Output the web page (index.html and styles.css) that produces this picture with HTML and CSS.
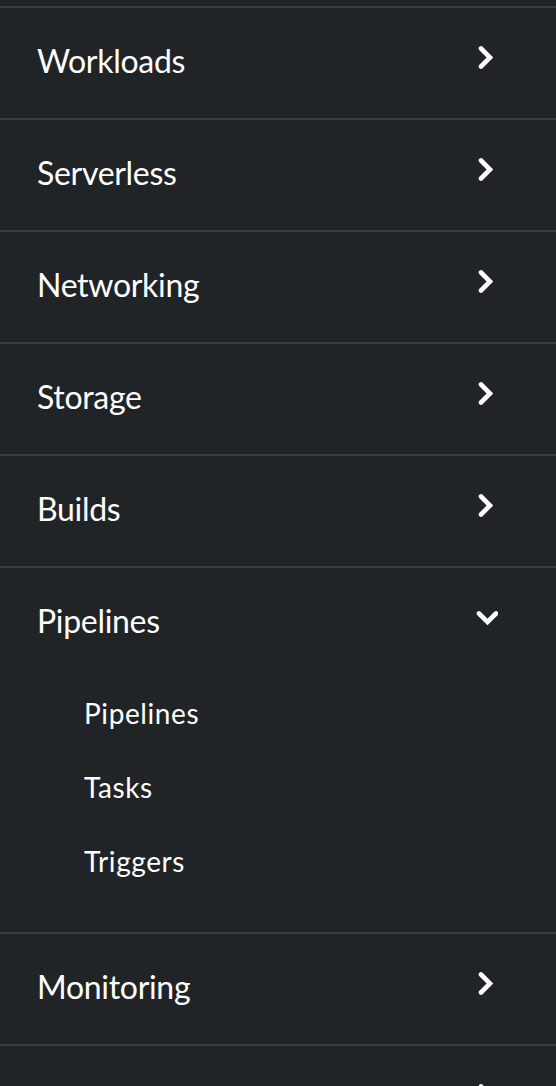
FILE: index.html
```html
<!DOCTYPE html>
<html lang="en">
<head>
<meta charset="utf-8">
<title>Navigation</title>
<link rel="stylesheet" href="styles.css">
</head>
<body>
<nav class="nav">
  <ul class="nav-list">
    <li class="nav-item">
      <button class="nav-toggle"><span class="nav-label">Workloads</span>
        <svg class="chev" viewBox="0 0 24 24"><polyline points="7,2.5 16,11.5 7,20.5"/></svg>
      </button>
    </li>
    <li class="nav-item">
      <button class="nav-toggle"><span class="nav-label">Serverless</span>
        <svg class="chev" viewBox="0 0 24 24"><polyline points="7,2.5 16,11.5 7,20.5"/></svg>
      </button>
    </li>
    <li class="nav-item">
      <button class="nav-toggle"><span class="nav-label">Networking</span>
        <svg class="chev" viewBox="0 0 24 24"><polyline points="7,2.5 16,11.5 7,20.5"/></svg>
      </button>
    </li>
    <li class="nav-item">
      <button class="nav-toggle"><span class="nav-label">Storage</span>
        <svg class="chev" viewBox="0 0 24 24"><polyline points="7,2.5 16,11.5 7,20.5"/></svg>
      </button>
    </li>
    <li class="nav-item">
      <button class="nav-toggle"><span class="nav-label">Builds</span>
        <svg class="chev" viewBox="0 0 24 24"><polyline points="7,2.5 16,11.5 7,20.5"/></svg>
      </button>
    </li>
    <li class="nav-item expanded">
      <button class="nav-toggle"><span class="nav-label">Pipelines</span>
        <svg class="chev" viewBox="0 0 24 24"><polyline points="5,7.5 13.5,16 22,7.5"/></svg>
      </button>
      <ul class="sub-list">
        <li class="sub-item">Pipelines</li>
        <li class="sub-item">Tasks</li>
        <li class="sub-item">Triggers</li>
      </ul>
    </li>
    <li class="nav-item">
      <button class="nav-toggle"><span class="nav-label">Monitoring</span>
        <svg class="chev" viewBox="0 0 24 24"><polyline points="7,2.5 16,11.5 7,20.5"/></svg>
      </button>
    </li>
    <li class="nav-item">
      <button class="nav-toggle"><span class="nav-label"></span>
        <svg class="chev" viewBox="0 0 24 24"><polyline points="7,2.5 16,11.5 7,20.5"/></svg>
      </button>
    </li>
  </ul>
</nav>
</body>
</html>
```

FILE: styles.css
```css
html, body {
  margin: 0;
  padding: 0;
  background: #212427;
  height: 100%;
  overflow: hidden;
}

.nav {
  padding-top: 6px;
  font-family: "Lato", "Noto Sans", sans-serif;
  color: #ffffff;
}

.nav-list, .sub-list {
  list-style: none;
  margin: 0;
  padding: 0;
}

.nav-item {
  border-top: 2px solid #3c3f42;
}

.nav-toggle {
  display: flex;
  align-items: flex-start;
  justify-content: space-between;
  width: 100%;
  box-sizing: border-box;
  height: 110px;
  padding: 34px 58px 0 37px;
  margin: 0;
  border: 0;
  background: transparent;
  color: inherit;
  font: inherit;
  font-size: 32px;
  line-height: 38px;
  letter-spacing: -0.3px;
  text-align: left;
}

.chev {
  width: 24px;
  height: 24px;
  margin-top: 4px;
  fill: none;
  stroke: #ffffff;
  stroke-width: 4.6;
  stroke-linecap: round;
  stroke-linejoin: miter;
}

.sub-list {
  padding-bottom: 32px;
}

.sub-item {
  padding: 18px 0 22px 84px;
  font-size: 28px;
  line-height: 34px;
  letter-spacing: 0.6px;
}
```
